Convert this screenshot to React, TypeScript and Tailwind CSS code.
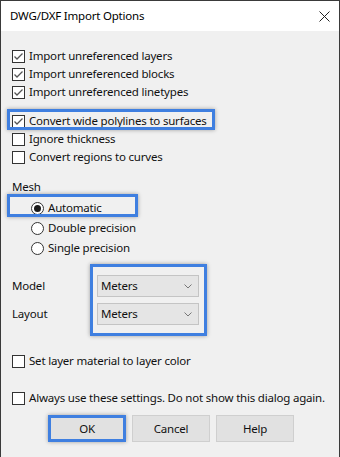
import type { ReactNode } from "react";

const font = { fontFamily: '"Noto Sans", "Liberation Sans", sans-serif' };

function Check({ checked, label }: { checked?: boolean; label: string }) {
  return (
    <div className="flex h-[18px] items-center">
      <span className="flex h-[13px] w-[13px] shrink-0 items-center justify-center border border-[#333333] bg-white">
        {checked && (
          <svg width="11" height="11" viewBox="0 0 11 11">
            <polyline points="1.5,5.5 4,8 9.5,2.5" fill="none" stroke="#555555" strokeWidth="1.3" />
          </svg>
        )}
      </span>
      <span className="ml-[4px] whitespace-nowrap">{label}</span>
    </div>
  );
}

function Radio({ checked, label }: { checked?: boolean; label: string }) {
  return (
    <div className="flex h-[20px] items-center pl-[19px]">
      <span className="flex h-[13px] w-[13px] shrink-0 items-center justify-center rounded-full border border-[#333333] bg-white">
        {checked && <span className="h-[7px] w-[7px] rounded-full bg-[#1a1a1a]" />}
      </span>
      <span className="ml-[4px] whitespace-nowrap">{label}</span>
    </div>
  );
}

function Select({ value }: { value: string }) {
  return (
    <div className="flex h-[22px] w-[102px] items-center justify-between border border-[#c4c4c4] bg-[#e5e5e5] pl-[3px] pr-[6px]">
      <span>{value}</span>
      <svg width="8" height="5" viewBox="0 0 8 5">
        <polyline points="0.5,0.5 4,4 7.5,0.5" fill="none" stroke="#777777" strokeWidth="1" />
      </svg>
    </div>
  );
}

function Mark({ className }: { className: string }) {
  return (
    <span
      className={`pointer-events-none absolute border-[3px] border-[#3f7fe0] shadow-[0_0_4px_rgba(0,0,0,0.35)] ${className}`}
    />
  );
}

function Button({ children, focused }: { children: ReactNode; focused?: boolean }) {
  return (
    <button
      className={`flex h-[27px] w-[78px] items-center justify-center bg-[#e1e1e1] ${
        focused
          ? "border-[3px] border-[#3f7fe0] shadow-[0_0_4px_rgba(0,0,0,0.35)]"
          : "border border-[#cfcfcf]"
      }`}
    >
      {children}
    </button>
  );
}

export default function App() {
  return (
    <div
      className="flex h-[457px] w-[340px] flex-col overflow-hidden border-x border-t border-[#3a3a3a] bg-[#f0f0f0] text-[11.5px] tracking-[-0.2px] text-[#111111]"
      style={font}
    >
      <div className="flex h-[30px] shrink-0 items-center justify-between bg-white pl-[9px] pr-[9px]">
        <span className="text-black">DWG/DXF Import Options</span>
        <svg width="11" height="11" viewBox="0 0 11 11">
          <path d="M0.5 0.5 L10.5 10.5 M10.5 0.5 L0.5 10.5" stroke="#222222" strokeWidth="1" />
        </svg>
      </div>

      <div className="flex flex-col pl-[11px] pt-[16px]">
        <Check checked label="Import unreferenced layers" />
        <Check checked label="Import unreferenced blocks" />
        <Check checked label="Import unreferenced linetypes" />

        <div className="relative mt-[11px]">
          <Check checked label="Convert wide polylines to surfaces" />
          <Mark className="left-[-5px] top-[-3px] h-[21px] w-[208px]" />
        </div>
        <Check label="Ignore thickness" />
        <Check label="Convert regions to curves" />

        <div className="mt-[12px] flex h-[18px] items-center">Mesh</div>
        <div className="relative mt-[2px]">
          <Radio checked label="Automatic" />
          <Mark className="left-[-5px] top-[-4px] h-[23px] w-[131px]" />
        </div>
        <Radio label="Double precision" />
        <Radio label="Single precision" />

        <div className="mt-[17px] flex">
          <div className="flex w-[85px] shrink-0 flex-col">
            <div className="flex h-[22px] items-center">Model</div>
            <div className="mt-[6px] flex h-[22px] items-center">Layout</div>
          </div>
          <div className="relative flex flex-col gap-[6px]">
            <Select value="Meters" />
            <Select value="Meters" />
            <Mark className="left-[-7px] top-[-11px] h-[72px] w-[117px]" />
          </div>
        </div>

        <div className="mt-[27px]">
          <Check label="Set layer material to layer color" />
        </div>
        <div className="mt-[19px]">
          <Check label="Always use these settings. Do not show this dialog again." />
        </div>

        <div className="mt-[8px] flex gap-[6px] pl-[36px]">
          <Button focused>OK</Button>
          <Button>Cancel</Button>
          <Button>Help</Button>
        </div>
      </div>
    </div>
  );
}
